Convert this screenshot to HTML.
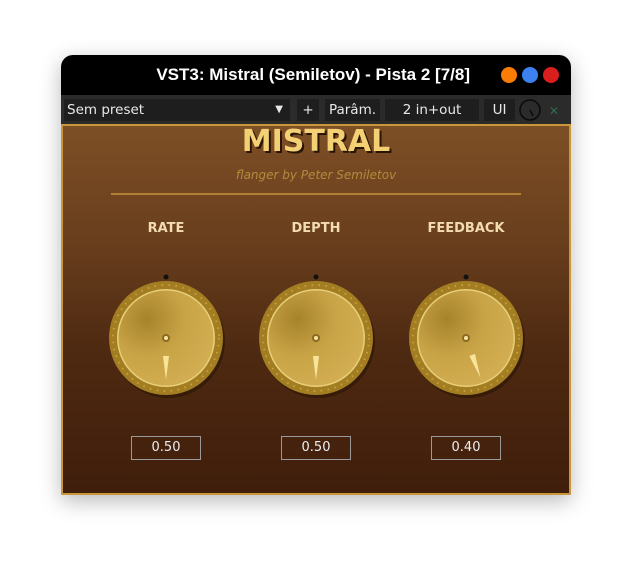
<!DOCTYPE html>
<html><head><meta charset="utf-8"><style>
body{margin:0;width:632px;height:561px;background:#fff;position:relative;overflow:hidden;font-family:"Liberation Sans","DejaVu Sans",sans-serif}
.win{position:absolute;left:61px;top:55px;width:510px;height:440px;border-radius:12px 12px 2px 2px;background:#000;box-shadow:0 6px 22px rgba(0,0,0,.28);overflow:hidden}
.title{position:absolute;left:0;top:0;width:510px;height:40px;color:#fff;font-family:"Liberation Sans",sans-serif;font-weight:bold;font-size:17px;line-height:40px}
.title span{position:absolute;right:101px;top:0;white-space:nowrap}
.dot{position:absolute;top:12px;width:16px;height:16px;border-radius:50%}
.tb{position:absolute;left:0;top:40px;width:510px;height:29px;background:#2b2b2b}
.btn{position:absolute;top:4px;height:22px;background:#1e1e1e;color:#e8e8e8;font-family:"DejaVu Sans",sans-serif;font-size:13.5px;line-height:22px;text-align:center}
.plug{position:absolute;left:0;top:69px;width:506px;height:367px;border:2px solid #c9963a;background:linear-gradient(#7d4f26 0%,#6a3f1d 30%,#4f2a12 60%,#3f1e0b 100%)}
.h{position:absolute;top:0;left:0;width:506px;text-align:center;font-family:"DejaVu Sans",sans-serif;font-weight:bold;font-size:30px;color:#f3d074;text-shadow:2px 2px 0 #2a1505;line-height:32px}
.sub{position:absolute;top:42px;width:506px;text-align:center;font-style:italic;font-family:"DejaVu Sans",sans-serif;font-size:12px;color:#b48a3c}
.line{position:absolute;left:48px;top:67px;width:410px;height:2px;background:#b18034}
.lab{position:absolute;top:95px;width:120px;text-align:center;color:#f3dcb0;font-family:"DejaVu Sans",sans-serif;font-weight:bold;font-size:13px}
.val{position:absolute;top:310px;width:68px;height:22px;border:1px solid #9a9a9a;color:#eee;font-family:"DejaVu Sans",sans-serif;font-size:13px;line-height:22px;text-align:center}
</style></head><body>
<div class="win">
 <div class="title"><span>VST3: Mistral (Semiletov) - Pista 2 [7/8]</span>
  <div class="dot" style="left:440px;background:#fb7b07"></div>
  <div class="dot" style="left:461px;background:#3b82f0"></div>
  <div class="dot" style="left:482px;background:#d91e1e"></div></div>
 <div class="tb">
  <div class="btn" style="left:3px;width:226px;text-align:left;padding-left:3px;box-sizing:border-box">Sem preset<span style="position:absolute;right:7px;top:0;font-size:10px">▼</span></div>
  <div class="btn" style="left:236px;width:22px">+</div>
  <div class="btn" style="left:264px;width:55px">Parâm.</div>
  <div class="btn" style="left:324px;width:94px">2 in+out</div>
  <div class="btn" style="left:423px;width:31px">UI</div>
  <svg style="position:absolute;left:457px;top:3px" width="24" height="24"><circle cx="12" cy="12" r="10" fill="none" stroke="#0a0a0a" stroke-width="1.5"/><line x1="12" y1="12" x2="15" y2="18" stroke="#0a0a0a" stroke-width="1.5"/></svg>
  <div style="position:absolute;left:488px;top:13px;color:#2e6b4a;font-size:12px;line-height:6px">✕</div>
 </div>
 <div class="plug">
  <div class="h">MISTRAL</div>
  <div class="sub">flanger by Peter Semiletov</div>
  <div class="line"></div>
  <div class="lab" style="left:43px">RATE</div>
  <div class="lab" style="left:193px">DEPTH</div>
  <div class="lab" style="left:343px">FEEDBACK</div>
  <svg style="position:absolute;left:0;top:0" width="506" height="367">
   <defs>
    <radialGradient id="g" cx="0.3" cy="0.3" r="0.8"><stop offset="0" stop-color="#a6822a"/><stop offset="0.5" stop-color="#c9a447"/><stop offset="1" stop-color="#d3ae52"/></radialGradient>
    <g id="k">
     <circle cx="2" cy="3" r="57" fill="#2a1405" opacity=".6"/>
     <circle cx="0" cy="0" r="57" fill="#a37d22"/>
     <circle cx="0" cy="0" r="53" fill="none" stroke="#c9a03e" stroke-width="2" stroke-dasharray="1.5 5.5"/>
     <circle cx="0" cy="0" r="49" fill="#e8cf7a"/>
     <circle cx="0" cy="0" r="47.5" fill="url(#g)"/>
     <circle cx="0" cy="0" r="4" fill="#8a6a20"/>
     <circle cx="0" cy="0" r="2" fill="#f8e6a0"/>
    </g>
   </defs>
   <g transform="translate(103,212)"><circle cx="0" cy="-61" r="2.5" fill="#111"/><use href="#k"/><polygon points="-3,18 3,18 0,42" fill="#f8e49a"/></g>
   <g transform="translate(253,212)"><circle cx="0" cy="-61" r="2.5" fill="#111"/><use href="#k"/><polygon points="-3,18 3,18 0,42" fill="#f8e49a"/></g>
   <g transform="translate(403,212)"><circle cx="0" cy="-61" r="2.5" fill="#111"/><use href="#k"/><polygon points="-3,18 3,18 0,42" fill="#f8e49a" transform="rotate(-20)"/></g>
  </svg>
  <div class="val" style="left:68px">0.50</div>
  <div class="val" style="left:218px">0.50</div>
  <div class="val" style="left:368px">0.40</div>
 </div>
</div>
</body></html>
